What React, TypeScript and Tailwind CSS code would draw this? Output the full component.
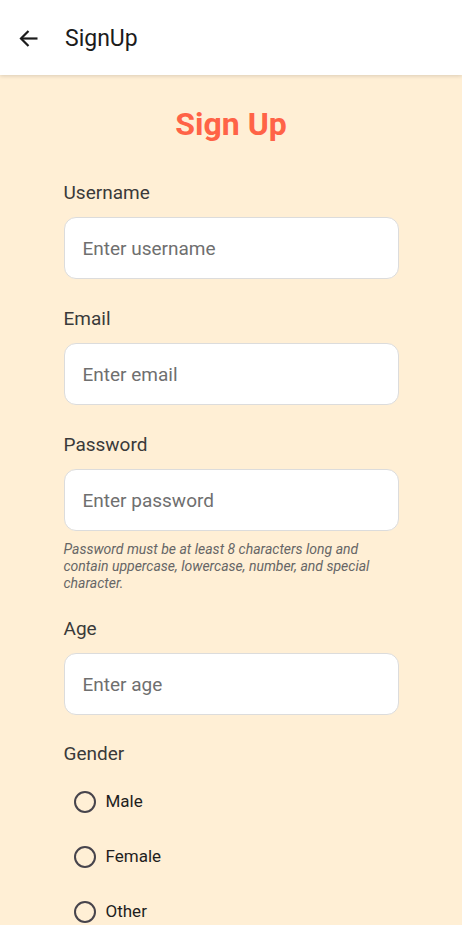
const font = { fontFamily: "Roboto, 'Noto Sans', sans-serif" };

function Field({
  label,
  placeholder,
  type = "text",
  className = "",
}: {
  label: string;
  placeholder: string;
  type?: string;
  className?: string;
}) {
  return (
    <div className={className}>
      <label className="block text-[19px] leading-6 text-[#3a3a3a]">{label}</label>
      <input
        type={type}
        placeholder={placeholder}
        className="mt-[12px] block h-[62px] w-full rounded-[12px] border border-[#dcdcdc] bg-white px-[18px] text-[19px] text-[#222] outline-none placeholder:text-[#6f6f6f]"
      />
    </div>
  );
}

function Radio({ label }: { label: string }) {
  return (
    <label className="flex h-[55px] items-center">
      <span className="ml-[10px] block h-[22px] w-[22px] rounded-full border-2 border-[#47444c]" />
      <span className="ml-[10px] text-[17px] text-[#1e1e1e]">{label}</span>
    </label>
  );
}

export default function App() {
  return (
    <div style={font} className="min-h-[925px] w-full bg-[#ffefd5]">
      <header className="relative z-10 flex h-[75px] items-center bg-white shadow-[0_1px_4px_rgba(0,0,0,0.15)]">
        <svg className="ml-[19px] mt-[1px]" width="19" height="17" viewBox="0 0 19 17" fill="none" stroke="#1c1c1c" strokeWidth="2.2">
          <path d="M18.5 8.5H2" />
          <path d="M9.5 1L2 8.5 9.5 16" />
        </svg>
        <h1 className="ml-[27px] mt-[4px] text-[23px] text-[#1c1c1c]">SignUp</h1>
      </header>

      <main className="mx-auto w-[335px] pt-[29px]">
        <h2 className="text-center text-[32px] font-bold leading-10 text-[#ff6347]">Sign Up</h2>

        <Field className="mt-[37px]" label="Username" placeholder="Enter username" />
        <Field className="mt-[28px]" label="Email" placeholder="Enter email" type="email" />
        <Field className="mt-[28px]" label="Password" placeholder="Enter password" type="password" />
        <p className="mt-[10px] text-[14px] italic leading-[17px] text-[#666]">
          Password must be at least 8 characters long and contain uppercase, lowercase, number, and special character.
        </p>
        <Field className="mt-[25px]" label="Age" placeholder="Enter age" type="number" />

        <div className="mt-[27px]">
          <div className="text-[19px] leading-6 text-[#3a3a3a]">Gender</div>
          <div className="mt-[8px]">
            <Radio label="Male" />
            <Radio label="Female" />
            <Radio label="Other" />
          </div>
        </div>
      </main>
    </div>
  );
}
